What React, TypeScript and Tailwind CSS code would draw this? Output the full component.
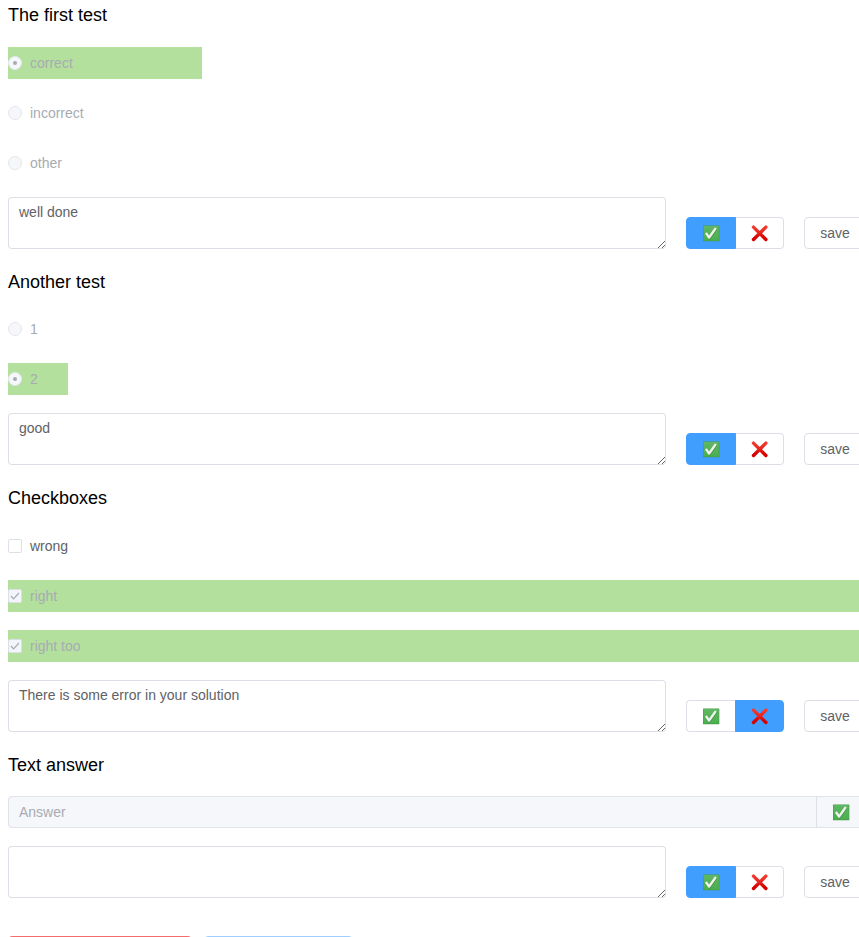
import type { ReactNode } from "react";

function CheckMark() {
  return (
    <svg viewBox="0 0 16 16" className="size-4 shrink-0 overflow-visible" role="img" aria-label="correct">
      <defs>
        <linearGradient id="tile" x1="0" y1="0" x2="0" y2="1">
          <stop offset="0" stopColor="#5fb763" />
          <stop offset="1" stopColor="#4caf50" />
        </linearGradient>
      </defs>
      <rect x="0" y="0.6" width="16.3" height="15.7" rx="0.6" fill="#439b47" />
      <rect x="0.5" y="1" width="15.2" height="14.6" rx="0.4" fill="url(#tile)" />
      <path d="M3.3 8.7 6.6 13 13.4 3.4" fill="none" stroke="#2f7d33" strokeOpacity="0.5" strokeWidth="2.6" />
      <path d="M2.9 8 6.1 12.5 12.9 3" fill="none" stroke="#f0f2ee" strokeWidth="2.3" strokeLinejoin="round" />
    </svg>
  );
}

function CrossMark() {
  return (
    <svg viewBox="0 0 16 16" className="size-4 shrink-0 overflow-visible" role="img" aria-label="incorrect">
      <defs>
        <linearGradient id="cross" gradientUnits="userSpaceOnUse" x1="0" y1="0" x2="0" y2="16">
          <stop offset="0" stopColor="#f44336" />
          <stop offset="0.5" stopColor="#e52620" />
          <stop offset="0.8" stopColor="#d50000" />
          <stop offset="1" stopColor="#d50000" />
        </linearGradient>
      </defs>
      <path d="M1.5 2.1 13.9 14.5M13.9 2.1 1.5 14.5" fill="none" stroke="url(#cross)" strokeWidth="3.4" strokeLinecap="round" />
    </svg>
  );
}

function Title({ children, className }: { children: ReactNode; className: string }) {
  return <h2 className={`text-[18px] leading-[20px] text-black ${className}`}>{children}</h2>;
}

function RadioRow({ label, checked, width = "w-[194px]" }: { label: string; checked?: boolean; width?: string }) {
  return (
    <label className={`mb-[18px] flex h-8 items-center text-[#a8abb2] ${width} ${checked ? "bg-[#b3e19d]" : ""}`}>
      <span className="flex size-[14px] items-center justify-center rounded-full border border-[#e4e7ed] bg-[#f5f7fa]">
        {checked && <span className="size-1 rounded-full bg-[#a8abb2]" />}
      </span>
      <span className="pl-2">{label}</span>
    </label>
  );
}

function CheckRow({ label, checked }: { label: string; checked?: boolean }) {
  return (
    <label className={`mb-[18px] flex h-8 items-center ${checked ? "bg-[#b3e19d] text-[#a8abb2]" : "text-[#606266]"}`}>
      <span
        className={`flex size-[14px] items-center justify-center rounded-[2px] border border-[#dcdfe6] ${checked ? "bg-[#f2f6fc]" : "bg-white"}`}
      >
        {checked && (
          <svg viewBox="0 0 12 12" className="size-3 shrink-0">
            <path d="M1.9 6 4.6 8.9 9.9 3" fill="none" stroke="#a8abb2" strokeWidth="1.2" />
          </svg>
        )}
      </span>
      <span className="pl-2">{label}</span>
    </label>
  );
}

function Review({ text, verdict = "right" }: { text: string; verdict?: "right" | "wrong" }) {
  const cell = "flex h-8 items-center justify-center border";
  const on = "bg-[#409eff] border-[#409eff]";
  const off = "bg-white border-[#dcdfe6]";
  return (
    <div className="flex h-[52px] items-end">
      <textarea
        defaultValue={text}
        className="block h-[52px] w-[658px] shrink-0 resize rounded-[4px] bg-white px-[11px] py-[5px] leading-[21px] text-[#606266] shadow-[inset_0_0_0_1px_#dcdfe6] outline-none"
      />
      <div className="ml-5 flex h-8 w-[98px] shrink-0">
        <button className={`${cell} w-[50px] rounded-l-[4px] ${verdict === "right" ? on : `${off} border-r-0 pr-px`}`}>
          <CheckMark />
        </button>
        <button
          className={`${cell} rounded-r-[4px] ${verdict === "wrong" ? `${on} -ml-px w-[49px]` : `${off} w-12 border-l-0`}`}
        >
          <CrossMark />
        </button>
      </div>
      <button className="ml-5 h-8 w-[62px] shrink-0 rounded-[4px] border border-[#dcdfe6] bg-white text-[#606266]">save</button>
    </div>
  );
}

export default function App() {
  return (
    <main className="h-[937px] overflow-hidden bg-white pl-2 font-['Liberation_Sans',Arial,sans-serif] text-[14px] leading-[14px]">
      <section>
        <Title className="h-[47px] pt-[5px]">The first test</Title>
        <RadioRow label="correct" checked />
        <RadioRow label="incorrect" />
        <RadioRow label="other" />
        <Review text="well done" />
      </section>
      <section>
        <Title className="h-16 pt-[23px]">Another test</Title>
        <RadioRow label="1" width="w-[60px]" />
        <RadioRow label="2" width="w-[60px]" checked />
        <Review text="good" />
      </section>
      <section>
        <Title className="h-[65px] pt-[23px]">Checkboxes</Title>
        <CheckRow label="wrong" />
        <CheckRow label="right" checked />
        <CheckRow label="right too" checked />
        <Review text="There is some error in your solution" verdict="wrong" />
      </section>
      <section>
        <Title className="h-16 pt-[23px]">Text answer</Title>
        <div className="mb-[18px] flex h-8 overflow-hidden rounded-l-[4px] border border-r-0 border-[#e0e3ea] bg-[#f5f7fa]">
          <input
            disabled
            placeholder="Answer"
            className="w-[807px] shrink-0 px-[10px] placeholder:text-[#a8abb2]"
          />
          <span className="flex shrink-0 items-center border-l border-[#dcdfe6] pl-4">
            <CheckMark />
          </span>
        </div>
        <Review text="" />
      </section>
      <div className="mt-[38px] flex gap-3">
        <button className="h-8 w-[184px] rounded-[4px] border border-[#f56c6c] bg-[#f56c6c]" />
        <button className="h-8 w-[149px] rounded-[4px] border border-[#a0cfff] bg-[#ecf5ff]" />
      </div>
    </main>
  );
}
